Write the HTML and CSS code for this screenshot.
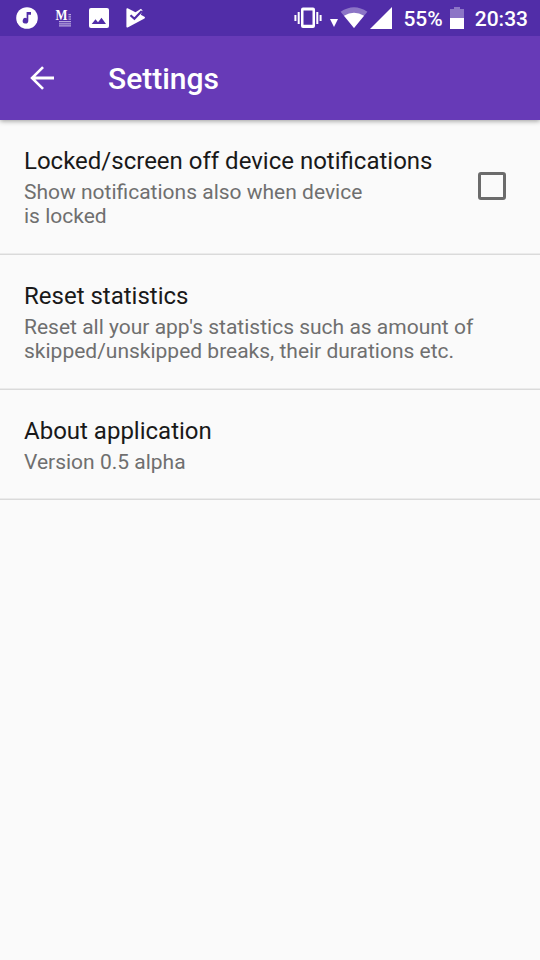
FILE: index.html
```html
<!DOCTYPE html>
<html lang="en">
<head>
<meta charset="utf-8">
<title>Settings</title>
<link rel="stylesheet" href="styles.css">
</head>
<body>
<header class="header">
  <div class="status">
    <div class="status-left">
      <svg class="icon" width="22" height="22" viewBox="0 0 22 22"><circle cx="11" cy="11" r="10.8"/><path class="cut" d="M10.6 5h4.400v2.700h-2.700v6.100a2.800 2.800 0 1 1-1.700-2.600z"/></svg>
      <svg class="icon medium" width="17" height="22" viewBox="0 -4 17 22"><path class="pale" d="M4 12h12v1.300H4zM4 14.200h12v1.200H4zM4 16.300h12v1.200H4zM13.500 5H16v1.200h-2.500zM13.500 7.300H16v1.200h-2.500zM13.500 9.600H16v1.200h-2.500z"/><text class="medium-letter" x=".5" y="10.500" textLength="12" lengthAdjust="spacingAndGlyphs">M</text></svg>
      <svg class="icon picture" width="20" height="20" viewBox="0 0 20 20"><rect width="20" height="20" rx="2"/><path class="cut" d="M2.700 16L6.500 11.200L9 14.300L12.500 9.800L17 16z"/></svg>
      <svg class="icon store" width="20" height="20" viewBox="0 0 20 20"><path d="M.4 1.200Q.4 0 1.600.3L9.500 4.300L15 .8L16.500 2.500L14.800 6.800L18 8.400Q20 9.600 18 10.800L1.600 19.400Q.4 19.700.4 18.600z"/><path class="cut-line" d="M4.500 7.200L8.400 10.800L15.800 3"/></svg>
    </div>
    <div class="status-right">
      <svg class="icon vibrate" width="28" height="22" viewBox="0 0 28 22"><path fill-rule="evenodd" d="M9 .4h10q2 0 2 2v16.600q0 2-2 2H9q-2 0-2-2V2.400q0-2 2-2zM9.500 3.600v14.200h9V3.600zM3.700 5h2v12h-2zM.4 8h2v6h-2zM22.300 5h2v12h-2zM25.600 8h2v6h-2z"/></svg>
      <svg class="icon caret" width="8" height="8" viewBox="0 0 8 8"><path d="M0 0h8L4 8z"/></svg>
      <svg class="icon wifi" width="28" height="22" viewBox="0 0 28 22"><path class="faint" d="M14 21L.6 4.800Q14-4.500 27.400 4.800z"/><path d="M14 21L4 8.800Q14 2.800 24 8.800z"/></svg>
      <svg class="icon signal" width="22" height="22" viewBox="0 0 22 22"><path d="M22 0v22H0z"/></svg>
      <span class="percent">55%</span>
      <svg class="icon battery" width="14" height="22" viewBox="0 0 14 22"><path class="faint" d="M0 2h4V0h6v2h4v9H0z"/><path d="M0 11h14v11H0z"/></svg>
      <span class="clock">20:33</span>
    </div>
  </div>
  <div class="toolbar">
    <svg class="icon" width="24" height="24" viewBox="0 0 24 24"><path d="M24 10.600H5.400L14 2.100 12.100.2.200 12l11.900 11.800 1.900-1.900-8.600-8.500H24z"/></svg>
    <h1 class="title">Settings</h1>
  </div>
</header>
<main>
  <section class="row row-tall">
    <div>
      <h2 class="name">Locked/screen off device notifications</h2>
      <p class="summary">Show notifications also when device<br>is locked</p>
    </div>
    <span class="checkbox" role="checkbox" aria-checked="false"></span>
  </section>
  <section class="row row-tall">
    <div>
      <h2 class="name">Reset statistics</h2>
      <p class="summary">Reset all your app's statistics such as amount of<br>skipped/unskipped breaks, their durations etc.</p>
    </div>
  </section>
  <section class="row row-short">
    <div>
      <h2 class="name">About application</h2>
      <p class="summary">Version 0.5 alpha</p>
    </div>
  </section>
</main>
</body>
</html>
```
FILE: styles.css
```css
* { box-sizing: border-box; }
body {
  margin: 0;
  min-height: 960px;
  background: #fafafa;
  font-family: Roboto, sans-serif;
}
h1, h2, p { margin: 0; }
svg { display: block; flex: none; }
.header {
  height: 120px;
  background: #673ab7;
  box-shadow: 0 1px 5px rgba(0, 0, 0, .4);
}
.status {
  display: flex;
  justify-content: space-between;
  height: 36px;
  padding: 7px 12px 0 16px;
  background: #512da8;
}
.status-left, .status-right { display: flex; }
.icon { fill: #fff; }
.cut { fill: #512da8; }
.cut-line { fill: none; stroke: #512da8; stroke-width: 2.2; }
.pale { fill: #b8a6de; }
.faint { fill: #8c75c6; }
.medium { margin: -2px 0 0 17px; overflow: visible; }
.medium-letter { font: bold 15px "Liberation Serif", serif; }
.picture { margin: 1px 0 0 17px; }
.store { margin: 1px 0 0 17px; }
.caret { margin: 12px 0 0 8px; }
.wifi { margin-left: 2px; }
.signal { margin-left: 2px; }
.percent, .clock {
  color: #fff;
  font-size: 21px;
  font-weight: 500;
  line-height: 24px;
}
.percent { margin-left: 11px; }
.battery { margin-left: 7px; }
.clock { margin-left: 11px; }
.toolbar {
  display: flex;
  align-items: center;
  height: 84px;
  padding-left: 30px;
}
.title {
  margin: 2px 0 0 54px;
  color: #fff;
  font-size: 30px;
  font-weight: 500;
  line-height: 36px;
}
.row {
  display: flex;
  justify-content: space-between;
  padding: 27px 34px 0 24px;
  border-bottom: 1px solid #dadada;
  box-shadow: inset 0 -1px #ebebeb;
}
.row-tall { height: 135px; }
.row-short { height: 110px; }
.name {
  color: #191919;
  font-size: 24px;
  font-weight: 400;
  line-height: 28px;
  white-space: nowrap;
}
.summary {
  margin-top: 5px;
  color: #6f6f6f;
  font-size: 21px;
  line-height: 24px;
  white-space: nowrap;
}
.checkbox {
  width: 28px;
  height: 28px;
  margin-top: 25px;
  border: 3px solid #6b6b6b;
  border-radius: 3px;
}
```
